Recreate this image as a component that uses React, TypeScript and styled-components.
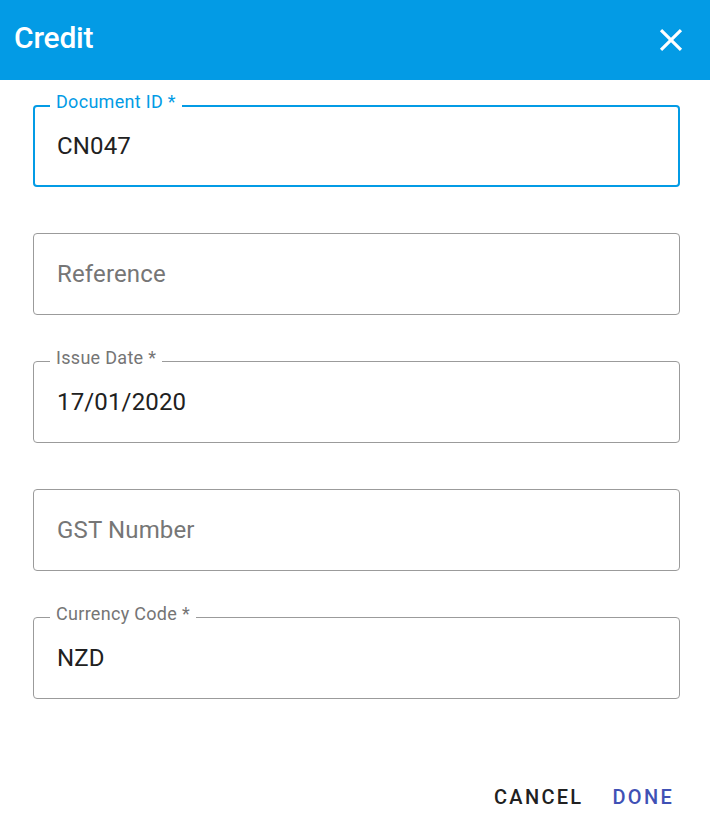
import React from "react";
import styled, { createGlobalStyle } from "styled-components";

const GlobalStyle = createGlobalStyle`
  html, body {
    margin: 0;
    padding: 0;
    background: #ffffff;
  }
  body {
    font-family: Roboto, "Noto Sans", "Liberation Sans", sans-serif;
  }
  * { box-sizing: border-box; }
`;

const Dialog = styled.div`
  width: 710px;
  height: 831px;
  display: flex;
  flex-direction: column;
  background: #ffffff;
  overflow: hidden;
`;

const Header = styled.header`
  height: 80px;
  flex: none;
  background: #039be5;
  display: flex;
  align-items: center;
  justify-content: space-between;
  padding: 0 20px 5px 14px;
`;

const Title = styled.h1`
  margin: 0;
  font-size: 30px;
  line-height: 36px;
  font-weight: 500;
  color: #ffffff;
  letter-spacing: -0.2px;
`;

const CloseButton = styled.button`
  width: 38px;
  height: 38px;
  padding: 0;
  margin-top: 5px;
  border: none;
  background: transparent;
  color: #ffffff;
  display: flex;
  align-items: center;
  justify-content: center;
  cursor: pointer;
`;

const Content = styled.div`
  display: flex;
  flex-direction: column;
  gap: 46px;
  padding: 25px 30px 0 33px;
`;

const FieldBox = styled.div<{ $focused?: boolean }>`
  position: relative;
  height: 82px;
  display: flex;
  align-items: center;
  border: ${(p) => (p.$focused ? "2px solid #039be5" : "1px solid #9b9b9b")};
  border-radius: 4px;
  padding: 0 0 0 ${(p) => (p.$focused ? "22px" : "23px")};
`;

const FieldLabel = styled.label<{ $focused?: boolean }>`
  position: absolute;
  top: ${(p) => (p.$focused ? "-14px" : "-13px")};
  left: ${(p) => (p.$focused ? "15px" : "16px")};
  padding: 0 6px;
  background: #ffffff;
  font-size: 18px;
  line-height: 18px;
  font-weight: 400;
  letter-spacing: 0.3px;
  color: ${(p) => (p.$focused ? "#039be5" : "#757575")};
  white-space: nowrap;
`;

const FieldInput = styled.input`
  flex: 1;
  min-width: 0;
  height: 30px;
  border: none;
  outline: none;
  padding: 0;
  margin: 0;
  background: transparent;
  font-family: Roboto, "Noto Sans", "Liberation Sans", sans-serif;
  font-size: 24px;
  line-height: 30px;
  letter-spacing: 0.15px;
  color: #212121;

  &::placeholder {
    color: #767676;
    opacity: 1;
  }
`;

const Footer = styled.footer`
  margin-top: 78px;
  display: flex;
  justify-content: flex-end;
  gap: 7px;
  padding-right: 26px;
`;

const ActionButton = styled.button<{ $primary?: boolean }>`
  height: 40px;
  padding: 0 10px 0 12px;
  border: none;
  background: transparent;
  font-family: Roboto, "Noto Sans", "Liberation Sans", sans-serif;
  font-size: 20px;
  font-weight: 500;
  letter-spacing: 2.3px;
  text-transform: uppercase;
  color: ${(p) => (p.$primary ? "#3f51b5" : "#212121")};
  cursor: pointer;
`;

type FieldProps = {
  label?: string;
  value?: string;
  placeholder?: string;
  focused?: boolean;
};

const Field: React.FC<FieldProps> = ({ label, value, placeholder, focused }) => (
  <FieldBox $focused={focused}>
    {label && <FieldLabel $focused={focused}>{label}</FieldLabel>}
    <FieldInput defaultValue={value} placeholder={placeholder} readOnly />
  </FieldBox>
);

const CloseIcon = () => (
  <svg width="38" height="38" viewBox="0 0 24 24" fill="currentColor">
    <path d="M19 6.41L17.59 5 12 10.59 6.41 5 5 6.41 10.59 12 5 17.59 6.41 19 12 13.41 17.59 19 19 17.59 13.41 12z" />
  </svg>
);

export default function App() {
  return (
    <>
      <GlobalStyle />
      <Dialog>
        <Header>
          <Title>Credit</Title>
          <CloseButton aria-label="close">
            <CloseIcon />
          </CloseButton>
        </Header>
        <Content>
          <Field label="Document ID *" value="CN047" focused />
          <Field placeholder="Reference" />
          <Field label="Issue Date *" value="17/01/2020" />
          <Field placeholder="GST Number" />
          <Field label="Currency Code *" value="NZD" />
        </Content>
        <Footer>
          <ActionButton>Cancel</ActionButton>
          <ActionButton $primary>Done</ActionButton>
        </Footer>
      </Dialog>
    </>
  );
}
